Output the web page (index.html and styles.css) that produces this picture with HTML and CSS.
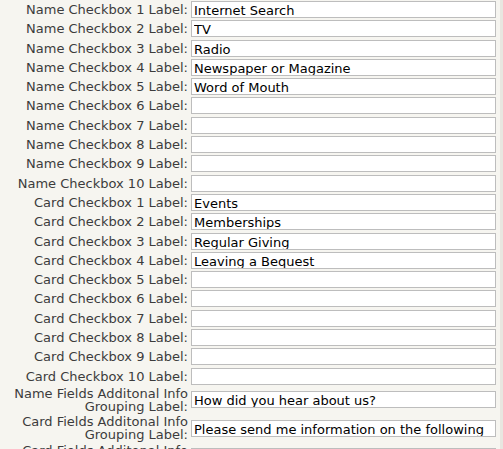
FILE: index.html
```html
<!DOCTYPE html>
<html lang="en">
<head>
  <meta charset="UTF-8" />
  <title>Checkbox Labels</title>
  <link rel="stylesheet" href="styles.css">
</head>
<body>
  <div class="page">
    <div class="form-grid">
      <label class="field-label">Name Checkbox 1 Label:</label><input class="field-input" type="text" value="Internet Search" />
      <label class="field-label">Name Checkbox 2 Label:</label><input class="field-input" type="text" value="TV" />
      <label class="field-label">Name Checkbox 3 Label:</label><input class="field-input" type="text" value="Radio" />
      <label class="field-label">Name Checkbox 4 Label:</label><input class="field-input" type="text" value="Newspaper or Magazine" />
      <label class="field-label">Name Checkbox 5 Label:</label><input class="field-input" type="text" value="Word of Mouth" />
      <label class="field-label">Name Checkbox 6 Label:</label><input class="field-input" type="text" value="" />
      <label class="field-label">Name Checkbox 7 Label:</label><input class="field-input" type="text" value="" />
      <label class="field-label">Name Checkbox 8 Label:</label><input class="field-input" type="text" value="" />
      <label class="field-label">Name Checkbox 9 Label:</label><input class="field-input" type="text" value="" />
      <label class="field-label">Name Checkbox 10 Label:</label><input class="field-input" type="text" value="" />
      <label class="field-label">Card Checkbox 1 Label:</label><input class="field-input" type="text" value="Events" />
      <label class="field-label">Card Checkbox 2 Label:</label><input class="field-input" type="text" value="Memberships" />
      <label class="field-label">Card Checkbox 3 Label:</label><input class="field-input" type="text" value="Regular Giving" />
      <label class="field-label">Card Checkbox 4 Label:</label><input class="field-input" type="text" value="Leaving a Bequest" />
      <label class="field-label">Card Checkbox 5 Label:</label><input class="field-input" type="text" value="" />
      <label class="field-label">Card Checkbox 6 Label:</label><input class="field-input" type="text" value="" />
      <label class="field-label">Card Checkbox 7 Label:</label><input class="field-input" type="text" value="" />
      <label class="field-label">Card Checkbox 8 Label:</label><input class="field-input" type="text" value="" />
      <label class="field-label">Card Checkbox 9 Label:</label><input class="field-input" type="text" value="" />
      <label class="field-label">Card Checkbox 10 Label:</label><input class="field-input" type="text" value="" />
      <label class="field-label">Name Fields Additonal Info Grouping Label:</label><input class="field-input" type="text" value="How did you hear about us?" />
      <label class="field-label">Card Fields Additonal Info Grouping Label:</label><input class="field-input" type="text" value="Please send me information on the following" />
      <label class="field-label">Card Fields Additonal Info Heading Label:</label><input class="field-input" type="text" value="" />
    </div>
  </div>
</body>
</html>
```
FILE: styles.css
```css
body {
  margin: 0;
  background-color: #f6f5f0;
  font-family: "DejaVu Sans", Verdana, sans-serif;
  font-size: 13px;
  overflow: hidden;
}
.page {
  width: 500px;
  height: 449px;
  border-right: 3px solid #e8e6e0;
  padding-top: 1px;
}
.form-grid {
  display: grid;
  grid-template-columns: 191px 305px;
  row-gap: 2.3px;
  align-items: center;
}
.field-label {
  text-align: right;
  padding-right: 3px;
  color: #3c3c3c;
  line-height: 13px;
}
.field-input {
  box-sizing: border-box;
  width: 305px;
  height: 17px;
  margin: 0;
  padding: 2px 2px 0;
  border: 1px solid #bdbdbd;
  background: #fff;
  font-family: "DejaVu Sans", Verdana, sans-serif;
  font-size: 13px;
  line-height: 16px;
  color: #000;
  outline: none;
}
```
